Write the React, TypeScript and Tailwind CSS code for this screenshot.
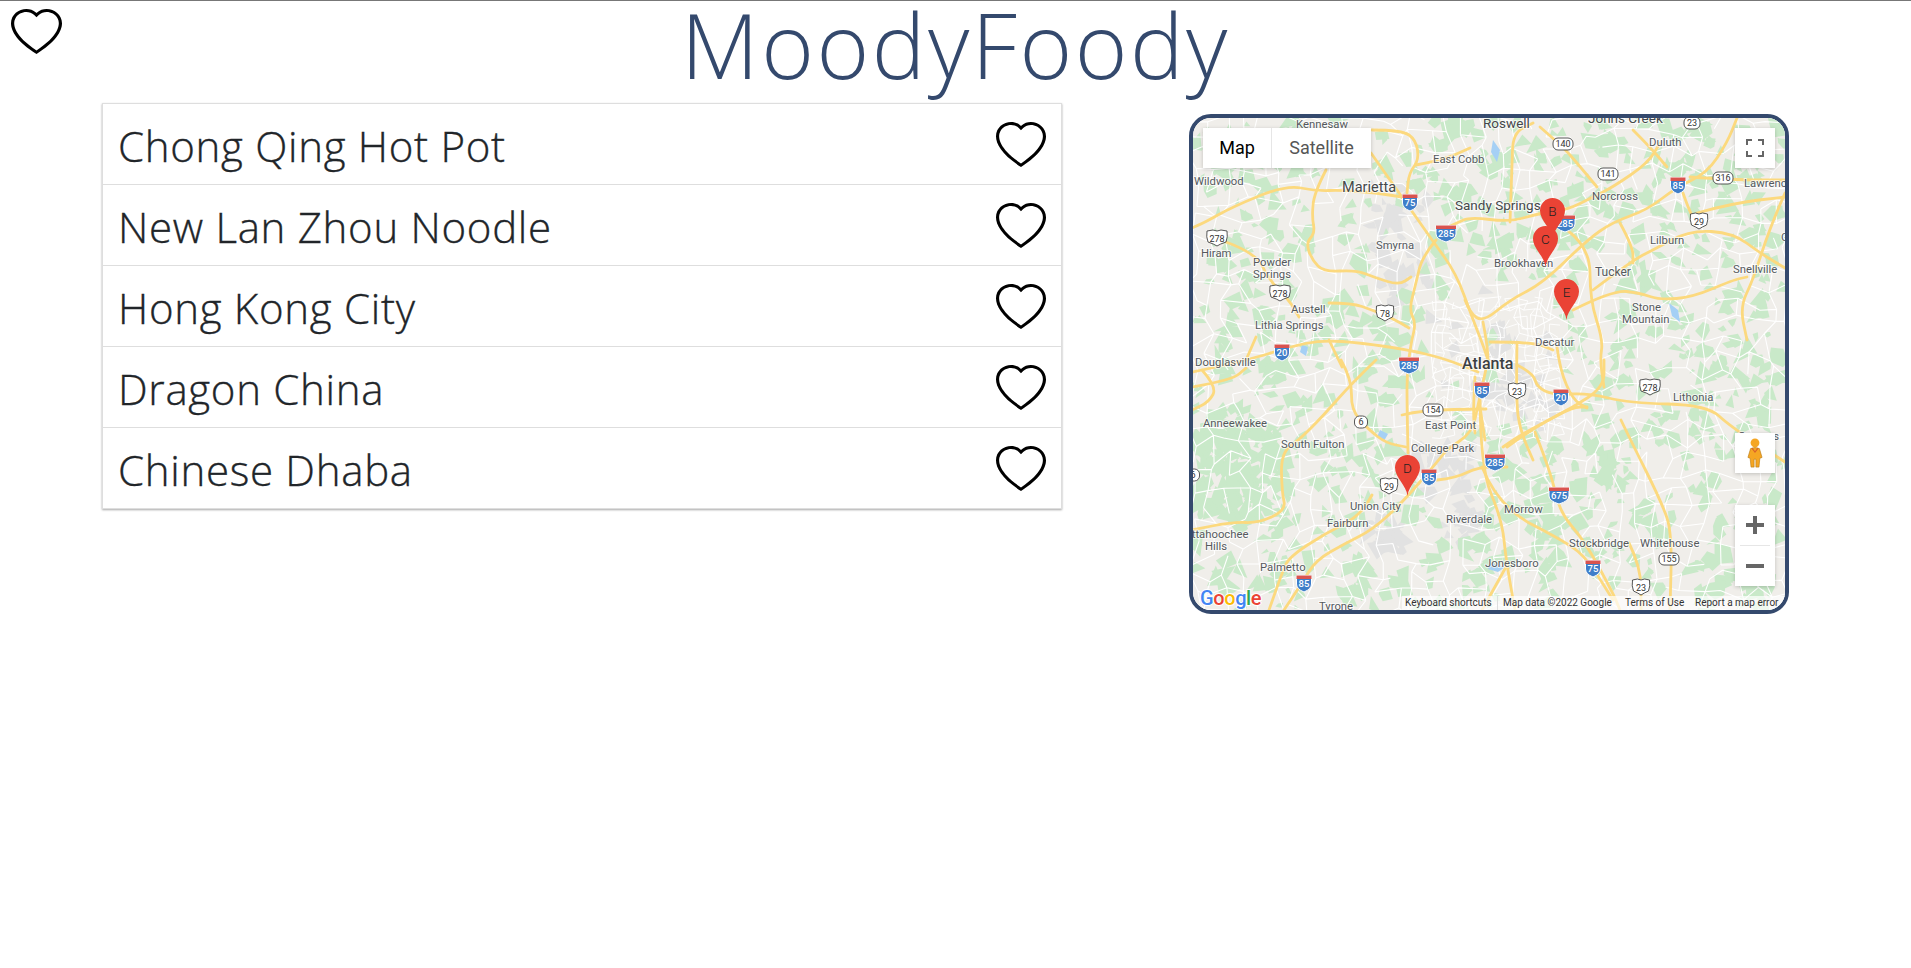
import React from 'react';

const places = [
  'Chong Qing Hot Pot',
  'New Lan Zhou Noodle',
  'Hong Kong City',
  'Dragon China',
  'Chinese Dhaba',
];

const HEART =
  'm8 2.748-.717-.737C5.6.281 2.514.878 1.4 3.053c-.523 1.023-.641 2.5.314 4.385.92 1.815 2.834 3.989 6.286 6.357 3.452-2.368 5.365-4.542 6.286-6.357.955-1.886.838-3.362.314-4.385C13.486.878 10.4.28 8.717 2.01L8 2.748zM8 15C-7.333 4.868 3.279-3.04 7.824 1.143c.06.055.119.112.176.171a3.12 3.12 0 0 1 .176-.17C12.72-3.042 23.333 4.867 8 15z';

const Heart = ({ className }: { className: string }) => (
  <svg viewBox="0 0 16 15" preserveAspectRatio="none" className={className} fill="black">
    <path d={HEART} />
  </svg>
);

// seeded so the map texture stays the same between renders
const seeded = (seed: number) => () => {
  seed = (seed + 0x6d2b79f5) | 0;
  let t = Math.imul(seed ^ (seed >>> 15), 1 | seed);
  t = (t + Math.imul(t ^ (t >>> 7), 61 | t)) ^ t;
  return ((t ^ (t >>> 14)) >>> 0) / 4294967296;
};

const X0 = 1193;
const Y0 = 118;
const X1 = 1785;
const Y1 = 610;

const cityZones = [
  [1490, 350, 70],
  [1395, 215, 38],
  [1440, 460, 36],
  [1400, 280, 30],
  [1530, 400, 36],
  [1385, 540, 26],
  [1460, 520, 24],
];

const blob = (r: () => number, cx: number, cy: number, size: number) => {
  const n = 3 + Math.floor(r() * 3);
  const pts: string[] = [];
  for (let i = 0; i < n; i++) {
    const a = (i / n) * Math.PI * 2 + r() * 0.9;
    const d = size * (0.4 + r() * 0.9);
    pts.push(`${(cx + Math.cos(a) * d).toFixed(1)},${(cy + Math.sin(a) * d).toFixed(1)}`);
  }
  return pts.join(' ');
};

const makeGreens = () => {
  const r = seeded(11);
  const out: string[] = [];
  for (let i = 0; i < 1150; i++) {
    const x = X0 + r() * (X1 - X0);
    const y = Y0 + r() * (Y1 - Y0);
    const inCity = cityZones.some(([cx, cy, d]) => Math.hypot(x - cx, y - cy) < d);
    if (inCity && r() < 0.85) continue;
    out.push(blob(r, x, y, 4 + r() * 9));
  }
  // the south west is mostly forest
  for (let i = 0; i < 120; i++) {
    out.push(blob(r, 1193 + r() * 95, 425 + r() * 100, 5 + r() * 7));
  }
  return out;
};

const makeGreys = () => {
  const r = seeded(23);
  const out: string[] = [];
  cityZones.forEach(([cx, cy, d]) => {
    for (let i = 0; i < 22; i++) {
      const a = r() * Math.PI * 2;
      const m = r() * d;
      out.push(blob(r, cx + Math.cos(a) * m, cy + Math.sin(a) * m, 5 + r() * 8));
    }
  });
  return out;
};

const makeStreets = (seed: number, x0: number, y0: number, x1: number, y1: number, step: number, keep: number) => {
  const r = seeded(seed);
  const cols = Math.ceil((x1 - x0) / step);
  const rows = Math.ceil((y1 - y0) / step);
  const p: number[][][] = [];
  for (let i = 0; i <= cols; i++) {
    p[i] = [];
    for (let j = 0; j <= rows; j++) {
      p[i][j] = [x0 + i * step + (r() - 0.5) * step * 0.85, y0 + j * step + (r() - 0.5) * step * 0.85];
    }
  }
  let d = '';
  for (let i = 0; i <= cols; i++) {
    for (let j = 0; j <= rows; j++) {
      const a = p[i][j];
      if (i < cols && r() < keep) d += `M${a[0].toFixed(1)} ${a[1].toFixed(1)}L${p[i + 1][j][0].toFixed(1)} ${p[i + 1][j][1].toFixed(1)}`;
      if (j < rows && r() < keep) d += `M${a[0].toFixed(1)} ${a[1].toFixed(1)}L${p[i][j + 1][0].toFixed(1)} ${p[i][j + 1][1].toFixed(1)}`;
    }
  }
  return d;
};

const greens = makeGreens();
const greys = makeGreys();
const streets = makeStreets(5, X0, Y0, X1, Y1, 17, 0.72);
const cityStreets = makeStreets(8, 1435, 300, 1560, 430, 9, 0.7);

// smooth line through page points
const line = (pts: number[][]) => {
  let d = `M${pts[0][0]} ${pts[0][1]}`;
  for (let i = 1; i < pts.length - 1; i++) {
    const mx = (pts[i][0] + pts[i + 1][0]) / 2;
    const my = (pts[i][1] + pts[i + 1][1]) / 2;
    d += `Q${pts[i][0]} ${pts[i][1]} ${mx} ${my}`;
  }
  const last = pts[pts.length - 1];
  return d + `L${last[0]} ${last[1]}`;
};

const highways: number[][][] = [
  [[1192, 228], [1204, 223], [1232, 207], [1286, 185], [1316, 191], [1342, 190], [1376, 193], [1402, 197]],
  [[1371, 153], [1402, 197], [1432, 240], [1456, 273], [1472, 317], [1483, 345], [1488, 360]],
  [[1326, 170], [1314, 193], [1312, 217], [1315, 233], [1306, 243], [1312, 260], [1324, 272], [1356, 270], [1376, 278], [1399, 285], [1411, 277]],
  [[1436, 240], [1422, 257], [1416, 283], [1409, 310], [1416, 323], [1411, 343], [1407, 373], [1407, 403], [1408, 453]],
  [[1193, 372], [1249, 360], [1289, 347], [1322, 340], [1362, 343], [1409, 350], [1442, 358], [1466, 367], [1478, 372]],
  [[1372, 130], [1402, 130], [1416, 140], [1419, 160], [1409, 173], [1407, 193]],
  [[1416, 165], [1443, 160], [1470, 148]],
  [[1226, 242], [1256, 253], [1269, 280], [1289, 300], [1299, 317]],
  [[1329, 303], [1352, 303], [1372, 310], [1392, 318], [1409, 328]],
  [[1256, 337], [1246, 360]],
  [[1329, 340], [1342, 367]],
  [[1192, 387], [1232, 380], [1246, 368]],
  [[1202, 370], [1217, 387], [1209, 402], [1192, 410]],
  [[1376, 360], [1352, 383], [1322, 417], [1299, 440], [1281, 453], [1282, 493], [1286, 510], [1259, 523], [1232, 522], [1192, 530]],
  [[1341, 360], [1352, 380], [1351, 410], [1369, 430], [1386, 443], [1406, 447]],
  [[1419, 483], [1402, 503], [1372, 530], [1346, 543], [1316, 560], [1302, 583], [1284, 610]],
  [[1372, 495], [1362, 515], [1326, 533], [1289, 557], [1282, 573], [1269, 610]],
  [[1402, 415], [1422, 410], [1486, 409]],
  [[1419, 483], [1439, 460], [1446, 450], [1472, 433], [1478, 405], [1488, 360]],
  [[1437, 480], [1456, 478], [1478, 467], [1507, 467]],
  [[1465, 300], [1470, 313], [1483, 322], [1510, 300], [1543, 283], [1587, 240], [1613, 222], [1647, 210], [1677, 187], [1707, 173], [1727, 143], [1737, 118]],
  [[1483, 322], [1487, 343], [1488, 360]],
  [[1475, 377], [1473, 410], [1475, 433]],
  [[1480, 407], [1485, 440]],
  [[1490, 342], [1533, 342], [1553, 350]],
  [[1517, 343], [1516, 400], [1520, 430], [1533, 460]],
  [[1503, 447], [1517, 437], [1543, 423], [1573, 407], [1587, 407]],
  [[1517, 365], [1533, 373], [1537, 387], [1553, 395], [1588, 393], [1629, 403], [1707, 405], [1731, 427], [1785, 462]],
  [[1557, 347], [1560, 370], [1573, 400], [1587, 408]],
  [[1437, 232], [1457, 223], [1470, 217], [1510, 222], [1540, 213], [1567, 210], [1593, 197], [1613, 187], [1648, 163], [1660, 143]],
  [[1510, 222], [1512, 167], [1513, 133], [1533, 123]],
  [[1540, 127], [1563, 147], [1577, 163], [1597, 187]],
  [[1633, 130], [1650, 147], [1667, 167]],
  [[1567, 230], [1590, 247], [1590, 300], [1603, 340], [1600, 360], [1604, 387]],
  [[1573, 310], [1613, 290], [1640, 293], [1660, 300], [1693, 297], [1733, 280], [1747, 277]],
  [[1593, 290], [1633, 260], [1653, 250], [1690, 230], [1733, 233], [1760, 253], [1785, 268]],
  [[1620, 223], [1633, 247], [1633, 263]],
  [[1697, 213], [1733, 203], [1785, 197]],
  [[1683, 193], [1690, 213], [1697, 223]],
  [[1690, 177], [1733, 180], [1785, 180]],
  [[1785, 193], [1770, 227], [1753, 280], [1740, 307], [1747, 340]],
  [[1507, 447], [1535, 427], [1572, 408], [1604, 387], [1604, 360]],
  [[1535, 432], [1551, 473], [1560, 513], [1584, 540], [1613, 593], [1620, 610]],
  [[1482, 467], [1498, 507], [1568, 543], [1588, 560], [1613, 600]],
  [[1480, 393], [1480, 467], [1502, 520], [1506, 560], [1515, 610]],
  [[1621, 420], [1629, 437], [1662, 503], [1672, 533], [1670, 610]],
  [[1629, 543], [1641, 567], [1641, 610]],
  [[1506, 567], [1482, 610]],
];

const labels: [string, number, number, number?][] = [
  ['Kennesaw', 1296, 128],
  ['Roswell', 1483, 128, 13.5],
  ['Johns Creek', 1588, 123, 13.5],
  ['East Cobb', 1433, 163],
  ['Duluth', 1649, 146],
  ['Lawrenceville', 1744, 187],
  ['Norcross', 1592, 200],
  ['Sandy Springs', 1455, 210, 13.5],
  ['Lilburn', 1650, 244],
  ['Snellville', 1733, 273],
  ['Tucker', 1595, 276, 12],
  ['Brookhaven', 1494, 267],
  ['Stone', 1632, 311],
  ['Mountain', 1622, 323],
  ['Decatur', 1535, 346],
  ['Marietta', 1342, 192, 14.5],
  ['Wildwood', 1194, 185],
  ['Hiram', 1201, 257],
  ['Powder', 1253, 266],
  ['Springs', 1253, 278],
  ['Smyrna', 1376, 249],
  ['Austell', 1291, 313],
  ['Lithia Springs', 1255, 329],
  ['Douglasville', 1195, 366],
  ['Anneewakee', 1203, 427],
  ['South Fulton', 1281, 448],
  ['East Point', 1425, 429],
  ['College Park', 1411, 452],
  ['Union City', 1350, 510],
  ['Fairburn', 1327, 527],
  ['Riverdale', 1446, 523],
  ['Morrow', 1504, 513],
  ['Jonesboro', 1485, 567],
  ['Stockbridge', 1569, 547],
  ['Whitehouse', 1640, 547],
  ['Lithonia', 1673, 401],
  ['Conyers', 1738, 440],
  ['Chattahoochee', 1172, 538],
  ['Hills', 1205, 550],
  ['Palmetto', 1260, 571],
  ['Tyrone', 1319, 610],
  ['Grayson', 1781, 241],
];

const interstates: [string, number, number][] = [
  ['75', 1410, 202],
  ['285', 1446, 233],
  ['285', 1565, 223],
  ['85', 1678, 185],
  ['20', 1282, 352],
  ['285', 1409, 365],
  ['85', 1482, 390],
  ['20', 1561, 397],
  ['285', 1495, 462],
  ['85', 1429, 477],
  ['675', 1559, 495],
  ['75', 1593, 568],
  ['85', 1304, 583],
];

const usRoutes: [string, number, number][] = [
  ['278', 1217, 238],
  ['278', 1280, 293],
  ['78', 1385, 313],
  ['29', 1699, 221],
  ['23', 1517, 391],
  ['278', 1650, 387],
  ['29', 1389, 486],
  ['23', 1641, 587],
];

const stateRoutes: [string, number, number][] = [
  ['140', 1563, 144],
  ['141', 1608, 174],
  ['23', 1692, 123],
  ['316', 1723, 178],
  ['154', 1433, 410],
  ['6', 1361, 422],
  ['6', 1193, 475],
  ['155', 1669, 559],
];

const pins: [string, number, number][] = [
  ['B', 1552.5, 239],
  ['C', 1545.5, 267],
  ['E', 1566.5, 320],
  ['D', 1407.5, 496],
];

const Interstate = ({ n, x, y }: { n: string; x: number; y: number }) => {
  const w = n.length > 2 ? 10 : 7.5;
  return (
    <g transform={`translate(${x} ${y})`}>
      <path d={`M${-w} -7.5 H${w} V1 Q${w} 6 0 9 Q${-w} 6 ${-w} 1Z`} fill="#3f7ec9" stroke="white" strokeWidth="1" />
      <path d={`M${-w} -7.5 H${w} V-4 H${-w}Z`} fill="#d9534f" />
      <text x="0" y="4" textAnchor="middle" fontSize="9.5" fontWeight="500" fill="white">
        {n}
      </text>
    </g>
  );
};

const UsRoute = ({ n, x, y }: { n: string; x: number; y: number }) => {
  const w = n.length > 2 ? 10 : 8.5;
  return (
    <g transform={`translate(${x} ${y})`}>
      <path d={`M${-w} -7 Q-3 -9 0 -7 Q3 -9 ${w} -7 Q${w + 1} -1 ${w - 1} 4 Q3 6 0 8 Q-3 6 ${1 - w} 4 Q${-w - 1} -1 ${-w} -7Z`} fill="white" stroke="#444" strokeWidth="0.9" />
      <text x="0" y="3.5" textAnchor="middle" fontSize="9" fill="#333">
        {n}
      </text>
    </g>
  );
};

const StateRoute = ({ n, x, y }: { n: string; x: number; y: number }) => {
  const w = n.length > 2 ? 10 : n.length > 1 ? 8 : 6.5;
  return (
    <g transform={`translate(${x} ${y})`}>
      <rect x={-w} y="-6" width={w * 2} height="12" rx="5" fill="white" stroke="#444" strokeWidth="0.9" />
      <text x="0" y="3.3" textAnchor="middle" fontSize="9" fill="#333">
        {n}
      </text>
    </g>
  );
};

const MapDrawing = () => (
  <svg
    viewBox={`${X0} ${Y0} 592 492`}
    className="block w-[592px] h-[492px] font-['Roboto',sans-serif]"
  >
    <rect x={X0} y={Y0} width="592" height="492" fill="#f0eeea" />
    {greys.map((p, i) => (
      <polygon key={i} points={p} fill="#e2e2e2" />
    ))}
    {greens.map((p, i) => (
      <polygon key={i} points={p} fill="#c9e9c9" />
    ))}
    <path d={streets} stroke="white" strokeWidth="1.1" fill="none" />
    <path d={cityStreets} stroke="white" strokeWidth="0.9" fill="none" />
    <g fill="#a5d0f5">
      <polygon points="1493,140 1500,150 1497,162 1491,152" />
      <polygon points="1669,303 1678,310 1680,322 1672,316" />
      <polygon points="1380,430 1388,434 1384,441 1377,437" />
      <polygon points="1302,345 1308,347 1306,356 1300,352" />
      <polygon points="1490,563 1505,567 1498,572 1488,569" />
    </g>
    {highways.map((h, i) => (
      <path key={i} d={line(h)} stroke="#fcd97e" strokeWidth="2.8" fill="none" strokeLinejoin="round" strokeLinecap="round" />
    ))}
    <g fontSize="11.3" fill="#55595d" stroke="white" strokeWidth="2" strokeOpacity="0.7" className="[paint-order:stroke]">
      {labels.map(([t, x, y, s]) => (
        <text key={t} x={x} y={y} fontSize={s} fill={s && s > 12 ? '#45484b' : undefined}>
          {t}
        </text>
      ))}
      <text x="1462" y="369" fontSize="16" fontWeight="500" fill="#3c4043">
        Atlanta
      </text>
    </g>
    {interstates.map(([n, x, y], i) => (
      <Interstate key={i} n={n} x={x} y={y} />
    ))}
    {usRoutes.map(([n, x, y], i) => (
      <UsRoute key={i} n={n} x={x} y={y} />
    ))}
    {stateRoutes.map(([n, x, y], i) => (
      <StateRoute key={i} n={n} x={x} y={y} />
    ))}
    {pins.map(([l, x, y]) => (
      <g key={l} transform={`translate(${x} ${y})`}>
        <path d="M0 0 C-1 -11 -12.5 -18 -12.5 -28.5 A12.5 12.5 0 1 1 12.5 -28.5 C12.5 -18 1 -11 0 0Z" fill="#ea4335" />
        <text x="0" y="-23" textAnchor="middle" fontSize="13.5" fontWeight="300" fill="#222">
          {l}
        </text>
      </g>
    ))}
    <text x="1200" y="605" fontSize="20" fontWeight="500" letterSpacing="-0.4" stroke="white" strokeWidth="2" className="[paint-order:stroke]">
      <tspan fill="#4285f4">G</tspan>
      <tspan fill="#ea4335">o</tspan>
      <tspan fill="#fbbc05">o</tspan>
      <tspan fill="#4285f4">g</tspan>
      <tspan fill="#34a853">l</tspan>
      <tspan fill="#ea4335">e</tspan>
    </text>
  </svg>
);

const MapCard = () => (
  <div className="relative w-[600px] h-[500px] mt-[11px] ml-[127px] border-[4px] border-[#34496d] rounded-[22px] overflow-hidden font-['Roboto',sans-serif]">
    <MapDrawing />

    {/* Map / Satellite */}
    <div className="absolute left-[10px] top-[10px] flex h-10 bg-white shadow-[0_1px_4px_rgba(0,0,0,0.2)] text-[18px] leading-10">
      <div className="w-[69px] text-center font-[450] text-black border-r border-[#e6e6e6]">Map</div>
      <div className="w-[99px] text-center text-[#565656]">Satellite</div>
    </div>

    {/* Fullscreen */}
    <div className="absolute right-[10px] top-[10px] flex items-center justify-center w-10 h-10 bg-white shadow-[0_1px_4px_rgba(0,0,0,0.2)]">
      <svg viewBox="0 0 18 18" className="w-[18px] h-[18px]" fill="#666">
        <path d="M0 0h6v2H2v4H0zM12 0h6v6h-2V2h-4zM0 12h2v4h4v2H0zM16 12h2v6h-6v-2h4z" />
      </svg>
    </div>

    {/* Pegman */}
    <div className="absolute right-[10px] top-[315px] flex items-center justify-center w-10 h-10 bg-white shadow-[0_1px_4px_rgba(0,0,0,0.2)]">
      <svg viewBox="0 0 18 34" className="w-[18px] h-[30px]">
        <circle cx="9" cy="5.5" r="5" fill="#f5a623" />
        <path d="M4 12 Q9 9.5 14 12 L17 22 L14.5 23 L13.5 33 H10 V24 H8 V33 H4.5 L3.5 23 L1 22Z" fill="#f5a623" stroke="#b87a14" strokeWidth="0.7" />
        <path d="M5.5 11.5 L9 16 L12.5 11.5" fill="none" stroke="#d9622b" strokeWidth="1.3" />
      </svg>
    </div>

    {/* Zoom */}
    <div className="absolute right-[10px] top-[387px] flex flex-col items-center w-10 h-[81px] bg-white shadow-[0_1px_4px_rgba(0,0,0,0.2)]">
      <div className="flex items-center justify-center h-10">
        <svg viewBox="0 0 18 18" className="w-[18px] h-[18px]" fill="#666">
          <path d="M7 0h4v7h7v4h-7v7H7v-7H0V7h7z" />
        </svg>
      </div>
      <div className="w-[30px] h-px bg-[#e6e6e6]" />
      <div className="flex items-center justify-center h-10">
        <svg viewBox="0 0 18 18" className="w-[18px] h-[18px]" fill="#666">
          <path d="M0 7h18v4H0z" />
        </svg>
      </div>
    </div>

    {/* Attribution */}
    <div className="absolute right-0 bottom-0 flex items-center w-[383px] h-[14px] bg-white/70 text-[10px] leading-[14px] text-[#333] whitespace-nowrap">
      <span className="w-[96px] pl-[3px] border-r border-[#ddd]">Keyboard shortcuts</span>
      <span className="w-[127px] pl-[5px]">Map data ©2022 Google</span>
      <span className="w-[70px]">Terms of Use</span>
      <span>Report a map error</span>
    </div>
  </div>
);

const App = () => (
  <div className="relative min-h-[968px] bg-white border-t border-[#777] font-['Open_Sans',sans-serif]">
    <Heart className="absolute left-[11px] top-[8px] w-[51px] h-[45px]" />

    <h1 className="h-[102px] text-center text-[90px] leading-[86px] font-light text-[#34496d] tracking-[2.5px]">
      MoodyFoody
    </h1>

    <div className="flex items-start pl-[102px]">
      <ul className="w-[960px] border border-[#dedede] shadow-[0_1px_2px_rgba(0,0,0,0.35)]">
        {places.map((name, idx) => (
          <li
            key={idx}
            className="flex items-center justify-between h-[81px] last:h-[80px] pl-[15px] pr-[15px] not-last:border-b border-[#dedede]"
          >
            <span className="pt-1 text-[42px] leading-none font-light tracking-[0.7px] text-[#212529] [-webkit-text-stroke:0.35px_#212529]">
              {name}
            </span>
            <Heart className="w-[50px] h-[45px]" />
          </li>
        ))}
      </ul>
      <MapCard />
    </div>
  </div>
);

export default App;
